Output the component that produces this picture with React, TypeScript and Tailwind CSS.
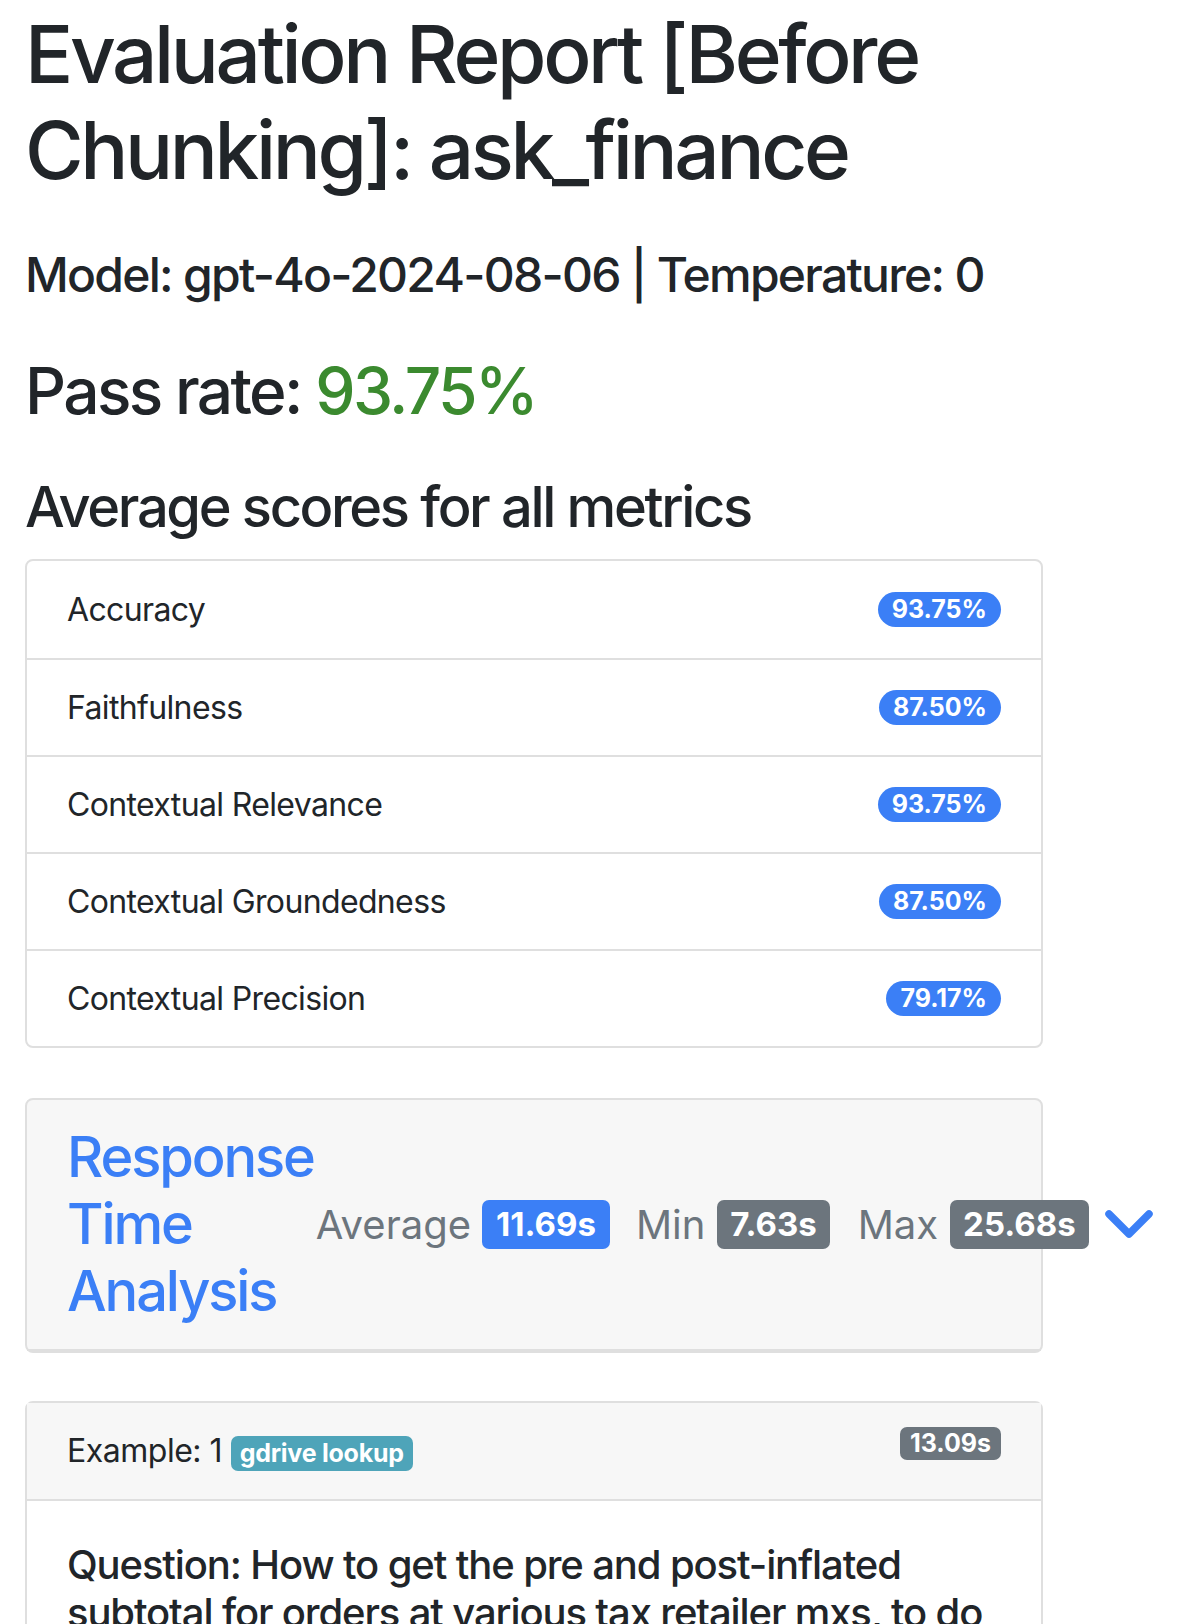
import React from 'react';

const metrics = [
  { name: 'Accuracy', score: '93.75%' },
  { name: 'Faithfulness', score: '87.50%' },
  { name: 'Contextual Relevance', score: '93.75%' },
  { name: 'Contextual Groundedness', score: '87.50%' },
  { name: 'Contextual Precision', score: '79.17%' },
];

const ChevronDown = () => (
  <svg width="48" height="30" viewBox="0 0 48 30" fill="none" className="shrink-0">
    <polyline
      points="4,4 24,24 44,4"
      stroke="#3b7ff6"
      strokeWidth="7.5"
      strokeLinecap="round"
      strokeLinejoin="round"
    />
  </svg>
);

const App: React.FC = () => {
  return (
    <div className="min-h-screen bg-white pl-[25px] pt-[6px] font-['Inter',sans-serif] text-[#212529]">
      <div className="w-[1018px]">
        {/* Title */}
        <h1 className="text-[80px] leading-[96px] font-medium tracking-[-0.042em]">
          Evaluation Report [Before Chunking]: ask_finance
        </h1>
        <h4 className="mt-[48px] text-[48px] leading-[58px] font-medium tracking-[-0.036em]">
          Model: gpt-4o-2024-08-06 | Temperature: 0
        </h4>
        <h2 className="mt-[48px] text-[64px] leading-[77px] font-medium tracking-[-0.041em]">
          Pass rate: <span className="text-[#3b8a2f]">93.75%</span>
        </h2>

        {/* Metrics */}
        <h3 className="mt-[45px] text-[56px] leading-[67px] font-medium tracking-[-0.042em]">
          Average scores for all metrics
        </h3>
        <ul className="mt-[18px] rounded-[8px] border-2 border-[#dfdfdf]">
          {metrics.map((m) => (
            <li
              key={m.name}
              className="flex h-[97px] items-center justify-between border-t-2 border-[#dfdfdf] px-[40px] text-[32px] first:border-t-0"
            >
              <span className="tracking-[-0.02em]">{m.name}</span>
              <span className="rounded-full bg-[#3b7ff6] px-[14px] py-[5px] text-[25px] leading-none font-bold text-white">
                {m.score}
              </span>
            </li>
          ))}
        </ul>

        {/* Response time */}
        <div className="mt-[50px] rounded-[8px] border-2 border-[#dfdfdf] bg-[#f7f7f7]">
          <div className="flex items-center border-b-2 border-[#dfdfdf] px-[40px] py-[24px]">
            <h3 className="text-[56px] leading-[67px] font-medium tracking-[-0.038em] text-[#3b7ff6]">
              Response Time Analysis
            </h3>
            <div className="ml-[2px] flex shrink-0 items-center whitespace-nowrap text-[40px] text-[#6c757d]">
              <span>Average</span>
              <span className="ml-[11px] rounded-[7px] bg-[#3b7ff6] px-[14px] py-[8px] text-[33px] leading-none font-bold text-white">
                11.69s
              </span>
              <span className="ml-[26px]">Min</span>
              <span className="ml-[12px] rounded-[7px] bg-[#6c757d] px-[13px] py-[8px] text-[33px] leading-none font-bold text-white">
                7.63s
              </span>
              <span className="ml-[28px]">Max</span>
              <span className="ml-[12px] rounded-[7px] bg-[#6c757d] px-[13px] py-[8px] text-[33px] leading-none font-bold text-white">
                25.68s
              </span>
              <span className="ml-[16px]">
                <ChevronDown />
              </span>
            </div>
          </div>
        </div>

        {/* Example */}
        <div className="mt-[48px] rounded-[8px] border-2 border-[#dfdfdf]">
          <div className="flex items-start justify-between border-b-2 border-[#dfdfdf] bg-[#f7f7f7] px-[40px] py-[24px] text-[32px] leading-[48px]">
            <div className="tracking-[-0.015em]">
              Example: 1{' '}
              <span className="inline-block rounded-[7px] bg-[#4ea4b9] px-[9px] py-[5px] text-[25px] leading-none font-bold tracking-[-0.01em] text-white">
                gdrive lookup
              </span>
            </div>
            <span className="rounded-[7px] bg-[#6c757d] px-[10px] py-[4px] text-[25px] leading-none font-bold text-white">
              13.09s
            </span>
          </div>
          <div className="p-[40px]">
            <h5 className="text-[40px] leading-[48px] font-medium tracking-[-0.028em]">
              Question: How to get the pre and post-inflated subtotal for orders at various tax retailer mxs, to do
              the reconciliation?
            </h5>
          </div>
        </div>
      </div>
    </div>
  );
};

export default App;
